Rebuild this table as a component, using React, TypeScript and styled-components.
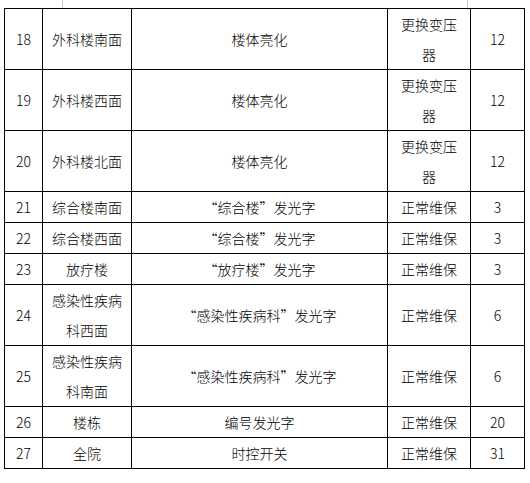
import styled, { createGlobalStyle } from 'styled-components';

const GlobalStyle = createGlobalStyle`
  html, body {
    margin: 0;
    padding: 0;
    background: #ffffff;
  }
  body {
    font-family: "Noto Sans CJK SC", "Noto Sans", sans-serif;
    font-weight: 300;
    color: #000000;
  }
`;

const Page = styled.div`
  position: relative;
  width: 530px;
  height: 483px;
  padding: 8px 0 0 4px;
  box-sizing: border-box;
`;

// faint table-edge marks above the top border
const EdgeMark = styled.span<{ $left: number }>`
  position: absolute;
  top: 0;
  left: ${(p) => p.$left}px;
  width: 1px;
  height: 8px;
  background: #c9c9c9;
`;

const Table = styled.table`
  border-collapse: collapse;
  table-layout: fixed;
  width: 520px;
  font-size: 14px;
  line-height: 30px;
`;

const Col = styled.col<{ $w: number }>`
  width: ${(p) => p.$w}px;
`;

const Cell = styled.td`
  border: 1px solid #000000;
  padding: 0 7px;
  text-align: center;
  vertical-align: middle;
  word-break: break-all;
`;

// full-width quote mark, as the original document font draws it
const Quote = styled.span<{ $open?: boolean }>`
  display: inline-block;
  width: 1em;
  text-align: ${(p) => (p.$open ? 'right' : 'left')};
`;

type Row = {
  no: number;
  place: string;
  quoted?: string;
  content: string;
  action: string;
  count: number;
};

const widths = [38, 89, 256, 83, 54];

const rows: Row[] = [
  { no: 18, place: '外科楼南面', content: '楼体亮化', action: '更换变压器', count: 12 },
  { no: 19, place: '外科楼西面', content: '楼体亮化', action: '更换变压器', count: 12 },
  { no: 20, place: '外科楼北面', content: '楼体亮化', action: '更换变压器', count: 12 },
  { no: 21, place: '综合楼南面', quoted: '综合楼', content: '发光字', action: '正常维保', count: 3 },
  { no: 22, place: '综合楼西面', quoted: '综合楼', content: '发光字', action: '正常维保', count: 3 },
  { no: 23, place: '放疗楼', quoted: '放疗楼', content: '发光字', action: '正常维保', count: 3 },
  { no: 24, place: '感染性疾病科西面', quoted: '感染性疾病科', content: '发光字', action: '正常维保', count: 6 },
  { no: 25, place: '感染性疾病科南面', quoted: '感染性疾病科', content: '发光字', action: '正常维保', count: 6 },
  { no: 26, place: '楼栋', content: '编号发光字', action: '正常维保', count: 20 },
  { no: 27, place: '全院', content: '时控开关', action: '正常维保', count: 31 },
];

export default function App() {
  return (
    <Page lang="zh-CN">
      <GlobalStyle />
      <EdgeMark $left={62} />
      <EdgeMark $left={467} />
      <Table>
        <colgroup>
          {widths.map((w, i) => (
            <Col key={i} $w={w} />
          ))}
        </colgroup>
        <tbody>
          {rows.map((r) => (
            <tr key={r.no}>
              <Cell>{r.no}</Cell>
              <Cell>{r.place}</Cell>
              <Cell>
                {r.quoted && (
                  <>
                    <Quote $open>“</Quote>
                    {r.quoted}
                    <Quote>”</Quote>
                  </>
                )}
                {r.content}
              </Cell>
              <Cell>{r.action}</Cell>
              <Cell>{r.count}</Cell>
            </tr>
          ))}
        </tbody>
      </Table>
    </Page>
  );
}
